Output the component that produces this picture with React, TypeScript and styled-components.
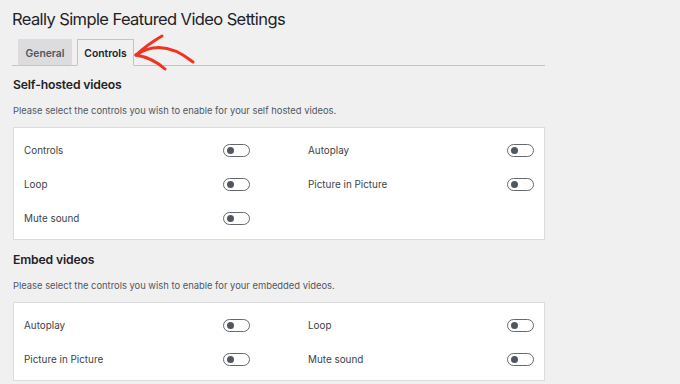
import styled, { createGlobalStyle } from "styled-components"

const GlobalStyle = createGlobalStyle`
  html, body {
    margin: 0;
    padding: 0;
    background: #f0f0f1;
  }
  body {
    font-family: Inter, "Noto Sans", "Liberation Sans", sans-serif;
    color: #1d2327;
  }
`

const Page = styled.div`
  width: 533px;
  padding: 7px 0 0 12px;
`

const Title = styled.h1`
  margin: 0 0 8px 0;
  font-size: 16.5px;
  line-height: 24px;
  font-weight: 400;
  letter-spacing: -0.6px;
  color: #1d2327;
`

const TabBar = styled.div`
  position: relative;
  display: flex;
  gap: 5px;
  padding-left: 6px;
  height: 26px;
  border-bottom: 1px solid #c3c4c7;
  margin-bottom: 10px;
`

const Tab = styled.div<{ $active?: boolean }>`
  display: flex;
  align-items: center;
  justify-content: center;
  box-sizing: border-box;
  width: ${({ $active }) => ($active ? "57px" : "54px")};
  height: 27px;
  font-size: 10.3px;
  font-weight: 600;
  color: ${({ $active }) => ($active ? "#1d2327" : "#50575e")};
  background: ${({ $active }) => ($active ? "#f0f0f1" : "#dcdcde")};
  border: 1px solid ${({ $active }) => ($active ? "#c3c4c7" : "#dcdcde")};
  border-bottom-color: ${({ $active }) => ($active ? "#f0f0f1" : "#c3c4c7")};
`

const Arrow = styled.svg`
  position: absolute;
  left: 106px;
  top: -8px;
  overflow: visible;
`

const Heading = styled.h2`
  margin: 0 0 10px 1px;
  font-size: 12.2px;
  line-height: 18px;
  font-weight: 600;
  letter-spacing: -0.15px;
  color: #1d2327;
`

const Description = styled.p`
  margin: 0 0 9px 1px;
  font-size: 9.4px;
  line-height: 14px;
  color: #50575e;
`

const Card = styled.div<{ $last?: boolean }>`
  margin: 0 0 ${({ $last }) => ($last ? "0" : "11px")} 1px;
  padding: 5px 11px 4px 10px;
  background: #fff;
  border: 1px solid #dcdcde;
  display: grid;
  grid-template-columns: 226px 226px;
  column-gap: 58px;
`

const Row = styled.div`
  height: 34px;
  display: flex;
  align-items: center;
  justify-content: space-between;
`

const Label = styled.span`
  font-size: 9.9px;
  color: #3c434a;
`

const Toggle = styled.span`
  box-sizing: border-box;
  width: 27px;
  height: 13px;
  border: 1px solid #646970;
  border-radius: 7px;
  background: #fff;
  display: flex;
  align-items: center;
  padding-left: 3px;

  &::before {
    content: "";
    width: 7px;
    height: 7px;
    border-radius: 50%;
    background: #50575e;
  }
`

const Option = ({ label }: { label?: string }) =>
  label ? (
    <Row>
      <Label>{label}</Label>
      <Toggle />
    </Row>
  ) : (
    <Row />
  )

export default function App() {
  return (
    <Page>
      <GlobalStyle />
      <Title>Really Simple Featured Video Settings</Title>
      <TabBar>
        <Tab>General</Tab>
        <Tab $active>Controls</Tab>
        <Arrow width="80" height="45" viewBox="0 0 80 45">
          <g fill="none" stroke="#f2331f" strokeWidth="3" strokeLinecap="round">
            <path d="M18,24 Q44,6 75,31" />
            <path d="M18,24 Q30,13 44,5" />
            <path d="M18,24 Q35,27 47,38" />
          </g>
        </Arrow>
      </TabBar>

      <Heading>Self-hosted videos</Heading>
      <Description>Please select the controls you wish to enable for your self hosted videos.</Description>
      <Card>
        <Option label="Controls" />
        <Option label="Autoplay" />
        <Option label="Loop" />
        <Option label="Picture in Picture" />
        <Option label="Mute sound" />
        <Option />
      </Card>

      <Heading>Embed videos</Heading>
      <Description>Please select the controls you wish to enable for your embedded videos.</Description>
      <Card $last>
        <Option label="Autoplay" />
        <Option label="Loop" />
        <Option label="Picture in Picture" />
        <Option label="Mute sound" />
      </Card>
    </Page>
  )
}
